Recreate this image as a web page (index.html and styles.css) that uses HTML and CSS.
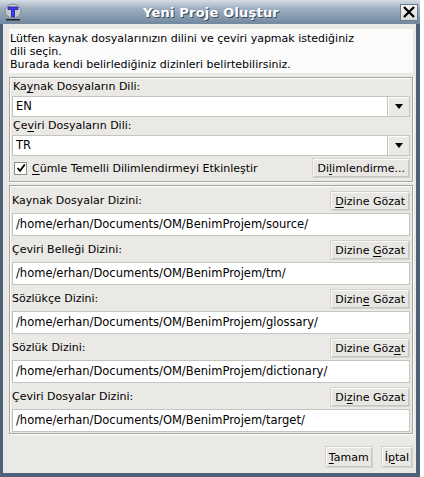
FILE: index.html
```html
<!DOCTYPE html>
<html>
<head>
<meta charset="utf-8">
<link rel="stylesheet" href="styles.css">
</head>
<body>
<div class="window">
  <div class="titlebar">
    <svg class="app-icon" width="18" height="18" viewBox="0 0 18 18">
      <ellipse cx="9" cy="8" rx="8" ry="7" fill="#c8c8c8" stroke="#8a8a8a"/>
      <path d="M4 4 H14 V6.5 H10.5 V14 H7.5 V6.5 H4 Z" fill="#3b3bff" stroke="#1a1aa0" stroke-width="0.8"/>
      <rect x="2" y="16" width="14" height="1.5" fill="#222"/>
    </svg>
    <div class="title">Yeni Proje Oluştur</div>
    <div class="close"><svg width="14" height="14" viewBox="0 0 14 14"><path d="M2 2 L12 12 M12 2 L2 12" stroke="#000" stroke-width="2.2"/></svg></div>
  </div>
  <div class="body">
    <div class="intro">Lütfen kaynak dosyalarınızın dilini ve çeviri yapmak istediğiniz<br>dili seçin.<br>Burada kendi belirlediğiniz dizinleri belirtebilirsiniz.</div>

    <div class="panel lang">
      <div class="label">Ka<u>y</u>nak Dosyaların Dili:</div>
      <div class="combo"><span class="combo-text">EN</span><span class="combo-btn"><i class="tri"></i></span></div>
      <div class="label">Çe<u>v</u>iri Dosyaların Dili:</div>
      <div class="combo"><span class="combo-text">TR</span><span class="combo-btn"><i class="tri"></i></span></div>
      <div class="check-row">
        <label class="check"><span class="box"><svg width="10" height="10" viewBox="0 0 10 10"><path d="M1.5 5 L4 7.8 L8.8 1.5" fill="none" stroke="#000" stroke-width="1.8"/></svg></span><span><u>C</u>ümle Temelli Dilimlendirmeyi Etkinleştir</span></label>
        <span class="btn"><span>Di<u>l</u>imlendirme...</span></span>
      </div>
    </div>

    <div class="panel dirs">
      <div class="group">
        <div class="row"><span class="label">Kaynak Dosyalar Dizini:</span><span class="btn"><span><u>D</u>izine Gözat</span></span></div>
        <div class="field">/home/erhan/Documents/OM/BenimProjem/source/</div>
      </div>
      <div class="group">
        <div class="row"><span class="label">Çeviri Belleği Dizini:</span><span class="btn"><span>Dizine <u>G</u>özat</span></span></div>
        <div class="field">/home/erhan/Documents/OM/BenimProjem/tm/</div>
      </div>
      <div class="group">
        <div class="row"><span class="label">Sözlükçe Dizini:</span><span class="btn"><span>Dizin<u>e</u> Gözat</span></span></div>
        <div class="field">/home/erhan/Documents/OM/BenimProjem/glossary/</div>
      </div>
      <div class="group">
        <div class="row"><span class="label">Sözlük Dizini:</span><span class="btn"><span>Dizine Göz<u>a</u>t</span></span></div>
        <div class="field">/home/erhan/Documents/OM/BenimProjem/dictionary/</div>
      </div>
      <div class="group">
        <div class="row"><span class="label">Çeviri Dosyalar Dizini:</span><span class="btn"><span>Di<u>z</u>ine Gözat</span></span></div>
        <div class="field">/home/erhan/Documents/OM/BenimProjem/target/</div>
      </div>
    </div>

    <div class="actions">
      <span class="btn"><span><u>T</u>amam</span></span>
      <span class="btn"><span>İ<u>p</u>tal</span></span>
    </div>
  </div>
</div>
</body>
</html>
```

FILE: styles.css
```css
html, body {
  margin: 0;
  padding: 0;
  background: #ffffff;
}
body {
  font-family: "DejaVu Sans", sans-serif;
  font-size: 11px;
  color: #000;
}
u { text-decoration: underline; text-underline-offset: 2px; }

.window {
  width: 420px;
  height: 477px;
  box-sizing: border-box;
  background: #4d6279;
  padding: 0 4px 4px 3px;
  display: flex;
  flex-direction: column;
}
.titlebar {
  height: 24px;
  margin: 0 -4px 0 -3px;
  background: linear-gradient(#d6dde5 0%, #9fb0c2 35%, #71889f 100%);
  display: flex;
  align-items: center;
}
.app-icon { margin-left: 4px; }
.title {
  flex: 1;
  text-align: center;
  font-weight: bold;
  font-size: 13px;
  color: #fff;
  text-shadow: 1px 1px 0 #39495a;
  letter-spacing: 0.2px;
}
.close {
  width: 18px;
  height: 17px;
  background: linear-gradient(#f4f4f2, #d8d8d4);
  border: 1px solid #6b7c8e;
  box-sizing: border-box;
  margin-right: 2px;
  display: flex;
  align-items: center;
  justify-content: center;
}
.body {
  flex: 1;
  background: #ebe9e5;
  padding: 5px 3px 0 6px;
  display: flex;
  flex-direction: column;
}
.intro {
  background: #fbfbfb;
  height: 44px;
  padding: 3px 0 0 1px;
  box-sizing: border-box;
  line-height: 13px;
  font-size: 11px;
}
.panel {
  border: 1px solid #a6a49f;
  box-shadow: inset 1px 1px 0 #fff, 1px 1px 0 #fff;
  padding: 0 2px 0 2px;
}
.panel.lang {
  margin-top: 4px;
  height: 105px;
  box-sizing: border-box;
}
.label {
  display: block;
  line-height: 18px;
  height: 18px;
  white-space: nowrap;
}
.panel.lang .label { padding-left: 1px; }
.combo {
  height: 21px;
  background: #fff;
  border: 1px solid #c6c4bf;
  box-sizing: border-box;
  display: flex;
}
.combo-text {
  flex: 1;
  font-size: 11.5px;
  line-height: 19px;
  padding-left: 3px;
}
.combo-btn {
  width: 21px;
  background: #ebe9e5;
  border-left: 1px solid #c6c4bf;
  box-shadow: inset 1px 1px 0 #fff;
  display: flex;
  align-items: center;
  justify-content: center;
}
.tri {
  width: 0; height: 0;
  border-left: 4px solid transparent;
  border-right: 4px solid transparent;
  border-top: 5px solid #000;
}
.check-row {
  display: flex;
  justify-content: space-between;
  align-items: center;
  height: 22px;
  margin-top: 1px;
}
.check { display: flex; align-items: center; gap: 5px; padding-left: 2px; }
.box {
  width: 11px; height: 11px;
  background: #fff;
  border: 1px solid #8f8d88;
  display: flex; align-items: center; justify-content: center;
}
.btn {
  display: inline-flex;
  align-items: center;
  justify-content: center;
  height: 20px;
  box-sizing: border-box;
  padding: 0 4px;
  background: #e9e7e3;
  border: 1px solid #d4d2cd;
  box-shadow: inset 1px 1px 0 #fafafa, inset -1px -1px 0 #c8c6c1;
  white-space: nowrap;
  font-size: 11px;
}
.btn > span { white-space: pre; }
.panel.dirs {
  margin-top: 3px;
  padding: 5px 2px 1px 2px;
}
.group { margin-bottom: 4px; }
.group:last-child { margin-bottom: 0; }
.row {
  display: flex;
  justify-content: space-between;
  align-items: center;
  height: 20px;
}
.row .label { line-height: 20px; height: 20px; }
.field {
  margin-top: 2px;
  height: 23px;
  background: #fff;
  border: 1px solid #c6c4bf;
  box-sizing: border-box;
  font-size: 11.5px;
  line-height: 21px;
  padding-left: 3px;
  white-space: nowrap;
}
.actions {
  display: flex;
  justify-content: flex-end;
  gap: 8px;
  margin-top: 12px;
  padding-right: 0;
}
.actions .btn { height: 22px; padding: 0 3px; }
```
